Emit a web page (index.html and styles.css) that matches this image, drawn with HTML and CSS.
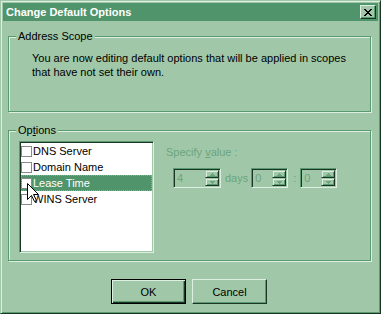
FILE: index.html
```html
<!DOCTYPE html>
<html>
<head>
<meta charset="utf-8">
<title>Change Default Options</title>
<link rel="stylesheet" href="styles.css">
</head>
<body>
<div class="win">
  <div class="titlebar">
    <span class="title">Change Default Options</span>
    <span class="close">
      <svg width="8" height="7" viewBox="0 0 8 7" shape-rendering="crispEdges"><path fill="#000" d="M0 0h2v1H0zM6 0h2v1H6zM1 1h2v1H1zM5 1h2v1H5zM2 2h4v1H2zM3 3h2v1H3zM2 4h4v1H2zM1 5h2v1H1zM5 5h2v1H5zM0 6h2v1H0zM6 6h2v1H6z"/></svg>
    </span>
  </div>
  <div class="content">
    <div class="group scope">
      <div class="group-title">Address Scope</div>
      <p class="desc">You are now editing default options that will be applied in scopes<br>that have not set their own.</p>
    </div>
    <div class="group options">
      <div class="group-title">Op<u>t</u>ions</div>
      <div class="opt-row">
        <div class="listbox">
          <div class="item"><span class="cb"></span>DNS Server</div>
          <div class="item"><span class="cb"></span>Domain Name</div>
          <div class="item sel"><span class="cb"></span>Lease Time</div>
          <div class="item"><span class="cb"></span>WINS Server</div>
        </div>
        <div class="value">
          <div class="value-label">Specify <u>v</u>alue :</div>
          <div class="spins">
            <div class="spin w-days">
              <span class="val">4</span>
              <span class="arrows">
                <span class="arr"><svg width="5" height="3" viewBox="0 0 5 3" shape-rendering="crispEdges"><path class="tri" d="M2 0h1v1h1v1h1v1H0V2h1V1h1z"/></svg></span>
                <span class="arr"><svg width="5" height="3" viewBox="0 0 5 3" shape-rendering="crispEdges"><path class="tri" d="M0 0h5v1H4v1H3v1H2V2H1V1H0z"/></svg></span>
              </span>
            </div>
            <span class="unit days">days</span>
            <div class="spin w-small">
              <span class="val">0</span>
              <span class="arrows">
                <span class="arr"><svg width="5" height="3" viewBox="0 0 5 3" shape-rendering="crispEdges"><path class="tri" d="M2 0h1v1h1v1h1v1H0V2h1V1h1z"/></svg></span>
                <span class="arr"><svg width="5" height="3" viewBox="0 0 5 3" shape-rendering="crispEdges"><path class="tri" d="M0 0h5v1H4v1H3v1H2V2H1V1H0z"/></svg></span>
              </span>
            </div>
            <span class="unit colon">:</span>
            <div class="spin w-small">
              <span class="val">0</span>
              <span class="arrows">
                <span class="arr"><svg width="5" height="3" viewBox="0 0 5 3" shape-rendering="crispEdges"><path class="tri" d="M2 0h1v1h1v1h1v1H0V2h1V1h1z"/></svg></span>
                <span class="arr"><svg width="5" height="3" viewBox="0 0 5 3" shape-rendering="crispEdges"><path class="tri" d="M0 0h5v1H4v1H3v1H2V2H1V1H0z"/></svg></span>
              </span>
            </div>
          </div>
        </div>
      </div>
    </div>
    <div class="buttons">
      <button class="btn default">OK</button>
      <button class="btn">Cancel</button>
    </div>
  </div>
  <svg class="cursor" width="13" height="20" viewBox="0 0 13 20"><path d="M0.5 0.5V16.5L4.5 12.5L7.5 18.5L9.5 17.5L6.5 11.5H11.5Z" fill="#fff" stroke="#000" stroke-width="1"/></svg>
</div>
</body>
</html>
```

FILE: styles.css
```css
:root {
  --bg: #a0c8a8;
  --title: #4f946a;
  --hi: #dcefe0;
  --shadow: #5a9a70;
  --dark: #1c3626;
  --dis: #6ca47e;
}

html, body {
  margin: 0;
  background: var(--bg);
}

body {
  font-family: "Liberation Sans", Arial, sans-serif;
  font-size: 11px;
  color: #000;
}

.win {
  position: relative;
  width: 381px;
  height: 314px;
  box-sizing: border-box;
  background: var(--bg);
  border: 1px solid;
  border-color: var(--bg) var(--dark) var(--dark) var(--bg);
  box-shadow: inset 1px 1px 0 var(--hi), inset -1px -1px 0 var(--shadow);
  padding: 2px;
  display: flex;
  flex-direction: column;
}

.titlebar {
  height: 18px;
  flex: none;
  background: var(--title);
  display: flex;
  align-items: center;
  justify-content: space-between;
  padding: 0 2px 0 3px;
  color: #fff;
  font-weight: bold;
  line-height: 18px;
}

.close {
  width: 16px;
  height: 14px;
  box-sizing: border-box;
  background: var(--bg);
  border: 1px solid;
  border-color: var(--hi) var(--dark) var(--dark) var(--hi);
  box-shadow: inset -1px -1px 0 var(--shadow);
  display: flex;
  align-items: center;
  justify-content: center;
}

.close svg {
  display: block;
}

.content {
  padding-left: 5px;
}

.group {
  width: 363px;
  box-sizing: border-box;
  border: 1px solid var(--shadow);
  box-shadow: inset 1px 1px 0 var(--hi), 1px 1px 0 var(--hi);
}

.group-title {
  display: table;
  margin: -7px 0 0 7px;
  padding: 0 2px;
  background: var(--bg);
  line-height: 13px;
}

.scope {
  margin-top: 15px;
  height: 76px;
}

.desc {
  margin: 8px 0 0 23px;
  line-height: 14px;
}

.options {
  margin-top: 18px;
  height: 131px;
}

.opt-row {
  display: flex;
  margin: 4px 0 0 10px;
}

.listbox {
  width: 135px;
  height: 112px;
  box-sizing: border-box;
  background: #fff;
  border: 1px solid;
  border-color: var(--shadow) var(--hi) var(--hi) var(--shadow);
  box-shadow: inset 1px 1px 0 var(--dark), inset -1px -1px 0 var(--bg);
  padding: 1px;
}

.item {
  height: 16px;
  display: flex;
  align-items: center;
  white-space: nowrap;
}

.cb {
  width: 11px;
  height: 11px;
  box-sizing: border-box;
  border: 1px solid #8a8a8a;
  background: #fff;
  margin-right: 1px;
  flex: none;
}

.item.sel {
  background: var(--title);
  color: #fff;
  outline: 1px dotted #e07fb0;
  outline-offset: -1px;
}

.value {
  margin: 5px 0 0 12px;
  color: var(--dis);
}

.value-label {
  line-height: 13px;
}

.spins {
  display: flex;
  align-items: center;
  margin: 9px 0 0 7px;
}

.spin {
  height: 20px;
  box-sizing: border-box;
  border: 1px solid;
  border-color: var(--shadow) var(--hi) var(--hi) var(--shadow);
  box-shadow: inset 1px 1px 0 var(--dark), inset -1px -1px 0 var(--bg);
  padding: 1px;
  display: flex;
  align-items: stretch;
}

.w-days { width: 48px; }
.w-small { width: 37px; }

.val {
  padding-left: 2px;
  line-height: 16px;
}

.arrows {
  margin-left: auto;
  width: 14px;
  display: flex;
  flex-direction: column;
}

.arr {
  flex: 1;
  box-sizing: border-box;
  border: 1px solid;
  border-color: var(--bg) var(--dark) var(--dark) var(--bg);
  box-shadow: inset 1px 1px 0 var(--hi), inset -1px -1px 0 var(--shadow);
  display: flex;
  align-items: center;
  justify-content: center;
}

.arr svg {
  display: block;
}

.tri {
  fill: var(--dis);
}

.days {
  margin: 0 3px 0 4px;
}

.colon {
  margin: 0 4px 0 5px;
}

.buttons {
  display: flex;
  gap: 6px;
  margin: 18px 0 0 103px;
}

.btn {
  width: 75px;
  height: 25px;
  box-sizing: border-box;
  font: inherit;
  color: #000;
  background: var(--bg);
  border: 1px solid;
  border-color: var(--hi) var(--dark) var(--dark) var(--hi);
  box-shadow: inset -1px -1px 0 var(--shadow);
  padding: 0;
}

.btn.default {
  border-color: #000;
  box-shadow: inset 1px 1px 0 var(--hi), inset -1px -1px 0 var(--dark), inset -2px -2px 0 var(--shadow);
}

.cursor {
  position: absolute;
  left: 26px;
  top: 182px;
}
```
